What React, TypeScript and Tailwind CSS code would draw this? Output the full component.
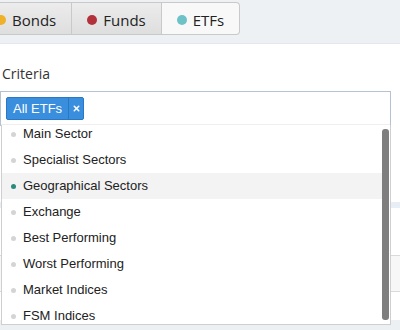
import { X } from "lucide-react";

const tabs = [
  { label: "Bonds", dot: "bg-[#f0b12a]", active: false },
  { label: "Funds", dot: "bg-[#b3313a]", active: false },
  { label: "ETFs", dot: "bg-[#6cc2c6]", active: true },
];

const options = [
  "Main Sector",
  "Specialist Sectors",
  "Geographical Sectors",
  "Exchange",
  "Best Performing",
  "Worst Performing",
  "Market Indices",
  "FSM Indices",
];

export default function App() {
  return (
    <div className="relative flex h-[330px] w-[400px] flex-col overflow-hidden bg-white font-['Open_Sans',sans-serif]">
      {/* tab strip */}
      <div className="flex h-[44px] shrink-0 items-start border-b border-[#e3e7eb] bg-[#eef1f4] pt-[2px]">
        <div className="ml-[-20px] flex">
          {tabs.map((t, i) => (
            <div
              key={t.label}
              className={
                "flex h-[33px] items-center gap-[6px] border border-[#c9c9c9] px-[15px] pt-[3px] text-[15px] text-[#222] " +
                (i > 0 ? "border-l-0 " : "") +
                (t.active
                  ? "rounded-r-[4px] bg-[#f8f8f8]"
                  : "bg-gradient-to-b from-[#ececec] to-[#dedede]")
              }
            >
              <span className={"size-[10px] rounded-full " + t.dot} />
              {t.label}
            </div>
          ))}
        </div>
      </div>

      <div className="mt-[20px] pl-[2px] text-[14px] leading-[20px] text-[#333]">Criteria</div>

      {/* open select */}
      <div className="relative z-10 mt-[7px] w-[391px] border border-[#b5c2cf] bg-white">
        <div className="flex h-[33px] items-start border-b border-[#efefef] pl-[5px] pt-[5px]">
          <div className="flex h-[23px] items-stretch rounded-[2px] border border-[#2a78c4] bg-[#3a8ede] font-['Liberation_Sans',Arial,sans-serif] text-[13px] text-white">
            <span className="flex items-center px-[6px]">All ETFs</span>
            <span className="flex w-[15px] items-center justify-center border-l border-[#2a78c4]">
              <X className="size-[9px]" strokeWidth={4} />
            </span>
          </div>
        </div>
        <div className="absolute left-[0px] right-[-1px] top-full h-[200px] overflow-hidden border-x border-b border-[#cfcfcf] bg-white font-['Liberation_Sans',Arial,sans-serif]">
          <ul className="mt-[-4px] pr-[8px]">
            {options.map((o) => {
              const on = o === "Geographical Sectors";
              return (
                <li
                  key={o}
                  className={
                    "flex h-[26px] items-center gap-[7px] pl-[9px] text-[13px] text-[#222] " +
                    (on ? "bg-[#f3f3f3]" : "")
                  }
                >
                  <span
                    className={"size-[5px] rounded-full " + (on ? "bg-[#2a8a7c]" : "bg-[#d4d4d4]")}
                  />
                  {o}
                </li>
              );
            })}
          </ul>
          <div className="absolute right-[1px] top-[4px] h-[191px] w-[7px] rounded-[3px] bg-[#7e7e7e]" />
        </div>
      </div>

      {/* content underneath the open list */}
      <div className="h-[76px] shrink-0" />
      <div className="h-[6px] shrink-0 bg-[#e7eef5]" />
      <div className="h-[47px] shrink-0" />
      <div className="h-[36px] shrink-0 border-t border-[#dadada] bg-[#f7f7f7]" />
      <div className="h-[29px] shrink-0 border-t border-[#dadada]" />
      <div className="flex-1 bg-[#edf0f3]" />
    </div>
  );
}
